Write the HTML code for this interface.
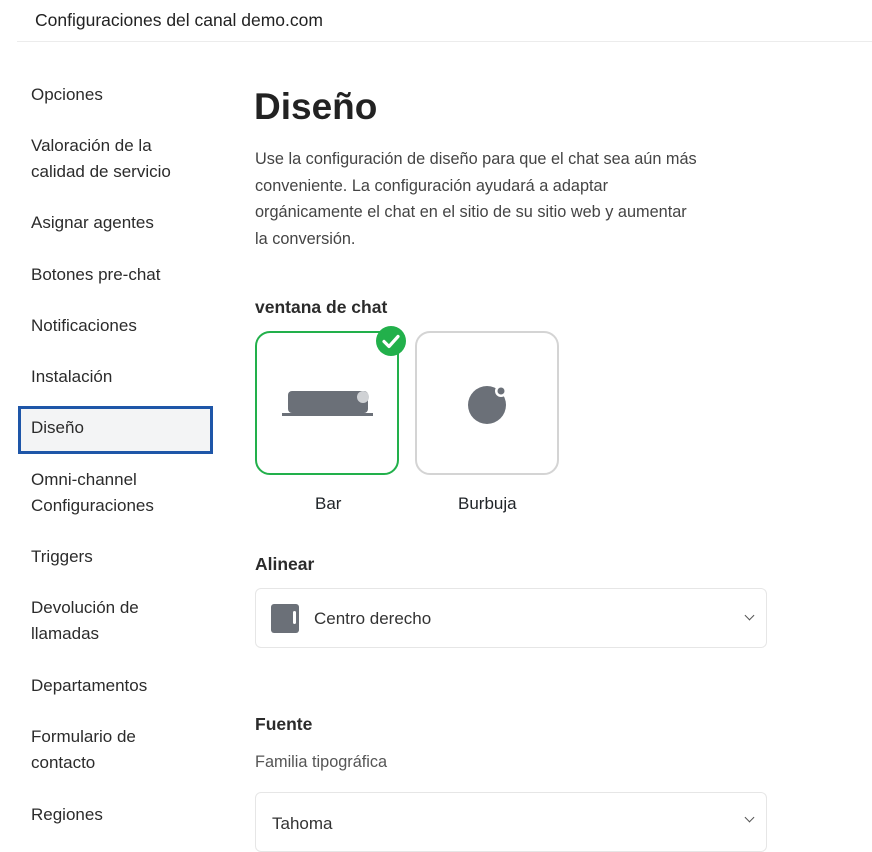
<!DOCTYPE html>
<html><head><meta charset="utf-8"><style>
*{margin:0;padding:0;box-sizing:border-box}
body{width:872px;height:847px;overflow:hidden;background:#fff;font-family:"Liberation Sans",sans-serif;color:#212529;position:relative}
.a{position:absolute;white-space:nowrap}
.hdr{left:35px;top:10px;font-size:17.5px;color:#222}
.line{position:absolute;left:17px;top:41px;width:855px;height:1px;background:#ececec}
.nav{font-size:17px;color:#2b2b2b;left:31px;line-height:26px}
.sel{position:absolute;left:18px;top:406px;width:195px;height:48px;border:3px solid #1e56a8;background:#f3f4f5}
h1{position:absolute;left:254px;top:86px;font-size:37px;font-weight:bold;color:#222}
.p{position:absolute;left:255px;top:146px;font-size:16.3px;line-height:26.5px;color:#444;white-space:nowrap}
.h{font-size:17.5px;font-weight:bold;color:#2b2b2b}
.card{position:absolute;top:331px;width:144px;height:144px;border-radius:15px;border:2px solid #d4d4d4;background:#fff}
.box{position:absolute;left:255px;width:512px;height:60px;border:1px solid #e6e6e6;border-radius:6px}
.chev{position:absolute;right:13px;top:23px;width:7px;height:7px;border-right:1.6px solid #555;border-bottom:1.6px solid #555;transform:rotate(45deg)}
</style></head><body>
<div class="a hdr">Configuraciones del canal demo.com</div>
<div class="line"></div>
<div class="sel"></div>
<div class="a nav" style="top:82px">Opciones</div>
<div class="a nav" style="top:133px">Valoración de la<br>calidad de servicio</div>
<div class="a nav" style="top:210px">Asignar agentes</div>
<div class="a nav" style="top:262px">Botones pre-chat</div>
<div class="a nav" style="top:313px">Notificaciones</div>
<div class="a nav" style="top:364px">Instalación</div>
<div class="a nav" style="top:415px">Diseño</div>
<div class="a nav" style="top:467px">Omni-channel<br>Configuraciones</div>
<div class="a nav" style="top:544px">Triggers</div>
<div class="a nav" style="top:595px">Devolución de<br>llamadas</div>
<div class="a nav" style="top:673px">Departamentos</div>
<div class="a nav" style="top:724px">Formulario de<br>contacto</div>
<div class="a nav" style="top:802px">Regiones</div>

<h1>Diseño</h1>
<div class="p">Use la configuración de diseño para que el chat sea aún más<br>conveniente. La configuración ayudará a adaptar<br>orgánicamente el chat en el sitio de su sitio web y aumentar<br>la conversión.</div>
<div class="a h" style="left:255px;top:297px">ventana de chat</div>

<div class="card" style="left:255px;border-color:#22b04b">
<svg width="144" height="144" style="position:absolute;left:-2px;top:-2px">
<rect x="33" y="60" width="80" height="22" rx="4" fill="#6b7078"/>
<circle cx="108" cy="66" r="6" fill="#d0d2d5"/>
<rect x="27" y="82" width="91" height="3" fill="#6b7078"/>
</svg></div>
<svg width="32" height="32" style="position:absolute;left:375px;top:325px"><circle cx="16" cy="16" r="15" fill="#22b04b"/><path d="M9 16.5l5 5 9-10" stroke="#fff" stroke-width="3.2" fill="none" stroke-linecap="round" stroke-linejoin="round"/></svg>
<div class="card" style="left:415px">
<svg width="144" height="144" style="position:absolute;left:-2px;top:-2px">
<circle cx="72" cy="74" r="19" fill="#6b7078"/><circle cx="86" cy="60" r="6" fill="#fff"/><circle cx="86" cy="60" r="3.5" fill="#6b7078"/>
</svg></div>
<div class="a" style="left:315px;top:494px;font-size:17px">Bar</div>
<div class="a" style="left:458px;top:494px;font-size:17px">Burbuja</div>

<div class="a h" style="left:255px;top:554px">Alinear</div>
<div class="box" style="top:588px">
<div style="position:absolute;left:15px;top:15px;width:28px;height:29px;border-radius:3px;background:#6b7078"></div>
<div style="position:absolute;left:37px;top:22px;width:3px;height:13px;border-radius:2px;background:#fff"></div>
<div class="a" style="left:58px;top:20px;font-size:17px;color:#333">Centro derecho</div>
<div class="chev"></div></div>

<div class="a h" style="left:255px;top:714px">Fuente</div>
<div class="a" style="left:255px;top:753px;font-size:16.3px;color:#555">Familia tipográfica</div>
<div class="box" style="top:792px">
<div class="a" style="left:16px;top:21px;font-size:17px;color:#333">Tahoma</div>
<div class="chev" style="top:21px"></div></div>
</body></html>
